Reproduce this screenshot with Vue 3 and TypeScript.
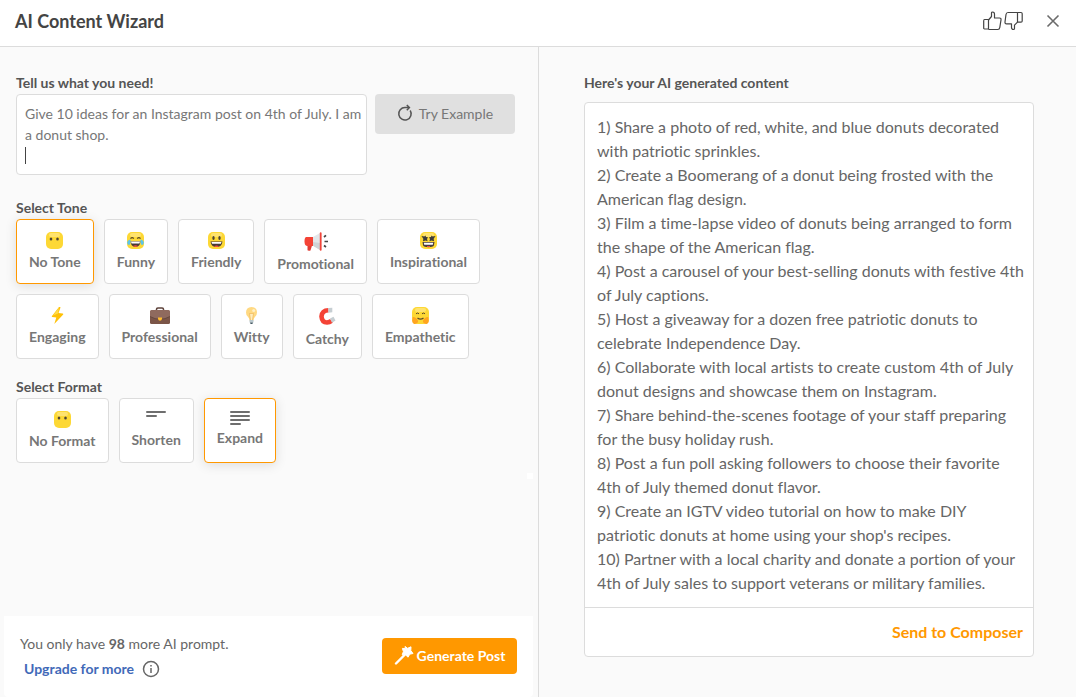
<script setup lang="ts">
import { ref } from 'vue'

interface Option {
  label: string
  icon: string
}

const prompt = ref('Give 10 ideas for an Instagram post on 4th of July. I am a donut shop.\n')
const tone = ref('No Tone')
const format = ref('Expand')
const remaining = 98

const tones: Option[] = [
  { label: 'No Tone', icon: 'blank' },
  { label: 'Funny', icon: 'joy' },
  { label: 'Friendly', icon: 'smile' },
  { label: 'Promotional', icon: 'megaphone' },
  { label: 'Inspirational', icon: 'star' },
  { label: 'Engaging', icon: 'bolt' },
  { label: 'Professional', icon: 'briefcase' },
  { label: 'Witty', icon: 'bulb' },
  { label: 'Catchy', icon: 'magnet' },
  { label: 'Empathetic', icon: 'hug' },
]

const formats: Option[] = [
  { label: 'No Format', icon: 'blank' },
  { label: 'Shorten', icon: 'short' },
  { label: 'Expand', icon: 'long' },
]

const groups = [
  { title: 'Select Tone', name: 'tone', options: tones, model: tone },
  { title: 'Select Format', name: 'format', options: formats, model: format },
]

const faces = ['blank', 'joy', 'smile', 'star', 'hug']

const ideas: string[] = [
  'Share a photo of red, white, and blue donuts decorated with patriotic sprinkles.',
  'Create a Boomerang of a donut being frosted with the American flag design.',
  'Film a time-lapse video of donuts being arranged to form the shape of the American flag.',
  'Post a carousel of your best-selling donuts with festive 4th of July captions.',
  'Host a giveaway for a dozen free patriotic donuts to celebrate Independence Day.',
  'Collaborate with local artists to create custom 4th of July donut designs and showcase them on Instagram.',
  'Share behind-the-scenes footage of your staff preparing for the busy holiday rush.',
  'Post a fun poll asking followers to choose their favorite 4th of July themed donut flavor.',
  "Create an IGTV video tutorial on how to make DIY patriotic donuts at home using your shop's recipes.",
  'Partner with a local charity and donate a portion of your 4th of July sales to support veterans or military families.',
]
</script>

<template>
  <div class="wizard">
    <header class="top">
      <h1>AI Content Wizard</h1>
      <div class="actions">
        <button type="button" class="plain" aria-label="Good result">
          <svg width="19" height="20" viewBox="0 0 19 20" fill="none" stroke="#444" stroke-width="1.2" stroke-linejoin="round">
            <path d="M1.5 8.500h4v9.500h-4q-.8 0-.8-1v-7q0-1.500.8-1.500z" />
            <path d="M5.500 9l3-3.500V2q0-1 1.200-1 1.800 0 1.800 2.200V7h5q1.700 0 1.500 1.800l-1.200 7.700q-.3 2-2 2H5.500" />
          </svg>
        </button>
        <button type="button" class="plain" aria-label="Bad result">
          <svg width="19" height="20" viewBox="0 0 19 20" fill="none" stroke="#444" stroke-width="1.2" stroke-linejoin="round">
            <path d="M13.500 1.500h3.500q1.200 0 1.200 1.200v7.300q0 1.200-1.200 1.200h-3.500z" />
            <path d="M13.500 1.500H4Q2.300 1.500 2 3.500L1 11q-.2 1.800 1.500 1.800h5v3.500q0 2.200 1.900 2.200 1.100 0 1.100-1v-3.300l3-3" />
          </svg>
        </button>
        <button type="button" class="plain close" aria-label="Close">
          <svg width="14" height="14" viewBox="0 0 14 14" fill="none" stroke="#6b6b6b" stroke-width="1.6">
            <path d="M1.500 1.500l11 11M12.500 1.500l-11 11" />
          </svg>
        </button>
      </div>
    </header>

    <div class="panes">
      <section class="pane">
        <div class="form">
          <label class="title" for="prompt">Tell us what you need!</label>
          <div class="ask">
            <div class="field">
              <textarea id="prompt" v-model="prompt"></textarea>
              <span class="caret"></span>
            </div>
            <button type="button" class="example">
              <svg width="16" height="18" viewBox="0 0 16 18" fill="none" stroke="#555" stroke-width="1.5">
                <path d="M13.200 6.500A6.200 6.200 0 1 1 8 3.600h4" />
                <path d="M9.800 1l2.600 2.600-2.600 2.600" />
              </svg>
              Try Example
            </button>
          </div>

          <fieldset v-for="g in groups" :key="g.name">
            <legend class="title">{{ g.title }}</legend>
            <div class="cards">
              <label v-for="o in g.options" :key="o.label" class="card" :class="{ active: g.model.value === o.label }">
                <input v-model="g.model.value" type="radio" :name="g.name" :value="o.label" />
                <svg v-if="faces.includes(o.icon)" width="17" height="17" viewBox="0 0 17 17">
                  <rect width="17" height="17" rx="5" fill="#fdd835" />
                  <rect x="3" y="1" width="11" height="4" rx="2" fill="#ffe36e" />
                  <g v-if="o.icon === 'blank'" fill="#4e4534">
                    <ellipse cx="5" cy="7" rx="1.300" ry="1.600" />
                    <ellipse cx="11.500" cy="7" rx="1.300" ry="1.600" />
                  </g>
                  <g v-else-if="o.icon === 'joy'">
                    <path d="M3.500 6.700q1.700-2 3.300 0M10.200 6.700q1.700-2 3.300 0" fill="none" stroke="#5c4b28" stroke-width="1.200" />
                    <path d="M3.500 9.300h10q-.5 5.700-5 5.700t-5-5.700z" fill="#4a3b36" />
                    <path d="M4 9.500h9l-.5 2h-8z" fill="#fff" />
                    <path d="M6 14q2.500-1.600 5 0-2.500 2-5 0z" fill="#ef4e43" />
                    <path d="M3.500 7.500Q0 8 .2 11q1 3.300 2.800 1.200.8-1.500.5-4.700zM13.500 7.500q3.500.5 3.300 3.500-1 3.300-2.800 1.200-.8-1.500-.5-4.700z" fill="#5cc4ea" />
                  </g>
                  <g v-else-if="o.icon === 'smile'">
                    <ellipse cx="5.500" cy="6" rx="1.200" ry="1.900" fill="#4e4534" />
                    <ellipse cx="11.500" cy="6" rx="1.200" ry="1.900" fill="#4e4534" />
                    <path d="M2.500 9.500h12q-.8 5.500-6 5.500t-6-5.500z" fill="#4a3b36" />
                    <path d="M3.500 10h10l-.6 1.800H4.100z" fill="#fff" />
                    <path d="M6 14.200q2.500-1.600 5 0-2.500 1.800-5 0z" fill="#ef4e43" />
                  </g>
                  <g v-else-if="o.icon === 'star'">
                    <path d="M1.500 4l2.800.5L5.500 3.500l.5 1.500 2 .3-1 1.700.6 2.200-2.100-.6-2.500.7.3-2.500zM15.500 4l-2.800.5-1.200-1-.5 1.500-2 .3 1 1.700-.6 2.200 2.100-.6 2.500.7-.3-2.500z" fill="#3c3b3a" />
                    <path d="M2.500 10h12l-.6 3.500q-1 1.700-5.400 1.700t-5.400-1.700z" fill="#4a3f3c" />
                    <path d="M3.800 10.800h9.400l-.4 2H4.200z" fill="#fff" />
                    <path d="M7 14h3v1H7z" fill="#ef4e43" />
                  </g>
                  <g v-else>
                    <path d="M4 6.800q1.500-1.500 3 0M10 6.800q1.500-1.500 3 0" fill="none" stroke="#5b4a2a" stroke-width="1" />
                    <path d="M5.500 11q3 2.200 6 0" fill="none" stroke="#5b4a2a" stroke-width="1.300" />
                    <path d="M.8 10q2.200-.5 3.600 1.500 2.400 1.500 1.300 4-1.500 2-4 1.200Q-.3 15.500.3 13zM16.200 10q-2.200-.5-3.600 1.500-2.400 1.500-1.300 4 1.500 2 4 1.200 2-1.200 1.400-3.700z" fill="#ffa51f" />
                  </g>
                </svg>
                <svg v-else-if="o.icon === 'megaphone'" width="24" height="19" viewBox="0 0 24 19">
                  <path d="M3.500 12h5l-2 6.500q-2.300.5-3-.2z" fill="#e03c34" />
                  <path d="M2 5h7v9H3Q.5 13.500.5 9.500T2 5z" fill="#f44336" />
                  <path d="M9 5l7-4v17l-7-4.300z" fill="#e3e7ea" />
                  <path d="M9 10l7 1v7l-7-4.300z" fill="#cfd4d7" />
                  <path d="M15.800 1q0-.8.9-.8.900 0 .9.800v17q0 .8-.9.800-.9 0-.9-.8z" fill="#f0453a" />
                  <path d="M20 5l2-1.700M20.500 9.500H24M20 13.500l2 1.500" stroke="#444" stroke-width="1.700" />
                </svg>
                <svg v-else-if="o.icon === 'bolt'" width="17" height="17" viewBox="0 0 17 17">
                  <path d="M10 0L2.800 9.200q-.3.800.5.900l4 .5L5.300 17l8.900-9.600q.3-.8-.5-.9L9.500 6l2-5.500q-.5-1-1.500-.5z" fill="#ffc107" />
                  <path d="M10 .5L4 8.500l5-2z" fill="#ffdb48" />
                </svg>
                <svg v-else-if="o.icon === 'briefcase'" width="20" height="17" viewBox="0 0 20 17">
                  <path d="M6.500 4V2.200q0-1.200 1.400-1.200h4.200q1.400 0 1.400 1.200V4" fill="none" stroke="#5e433b" stroke-width="1.500" />
                  <rect y="3.500" width="20" height="13.500" rx="1.500" fill="#7b5548" />
                  <path d="M0 4.500Q0 3 1.500 3h17Q20 3 20 4.500v5q-5 2.800-10 2.800T0 9.500z" fill="#8f6a5e" />
                  <path d="M0 9.500q5 2.800 10 2.800t10-2.800" fill="none" stroke="#60443b" stroke-width=".8" />
                  <path d="M8 10.500h4v1.500q-.4 1.700-2 1.700T8 12z" fill="#ffbd2f" />
                </svg>
                <svg v-else-if="o.icon === 'bulb'" width="17" height="17" viewBox="0 0 17 17">
                  <path d="M8.500 0Q3 .3 3 5.500q0 2.500 1.700 4 1.600 1.500 1.800 4h4q.2-2.500 1.800-4 1.700-1.500 1.700-4Q14 .3 8.500 0z" fill="#ffd982" />
                  <path d="M7.500 13L6.500 6.500h4L9.500 13" fill="#ffedbd" stroke="#ecae4b" stroke-width=".6" />
                  <circle cx="10.700" cy="3.500" r="1.500" fill="#fff0c5" />
                  <path d="M6.500 13h4v2.500h-4z" fill="#b9c7cd" />
                  <path d="M7 15.500h3l-.6 1.500H7.600z" fill="#455a64" />
                </svg>
                <svg v-else-if="o.icon === 'magnet'" width="18" height="19" viewBox="0 0 18 19">
                  <path d="M10.500 3.300Q4 3.500 3.500 9.500 4 15.500 9 15.500 11.500 15.300 13.500 13.800" fill="none" stroke="#f44336" stroke-width="4.600" />
                  <path d="M10.300 1.100l4-.4v4.600l-4 .4z" fill="#c6ced2" />
                  <path d="M12 11.600l3.500-1.800 2 3.700-3.500 2.300z" fill="#c6ced2" />
                </svg>
                <svg v-else-if="o.icon === 'short'" width="20" height="16" viewBox="0 0 20 16" stroke="#6e6e6e" stroke-width="2" stroke-linecap="round">
                  <path d="M1 1h18M1 5h9" />
                </svg>
                <svg v-else width="20" height="14" viewBox="0 0 20 14" stroke="#6e6e6e" stroke-width="2" stroke-linecap="round">
                  <path d="M1 1h18M1 5h18M1 9h18M1 13h9" />
                </svg>
                <span>{{ o.label }}</span>
              </label>
            </div>
          </fieldset>
        </div>

        <span class="grip"></span>

        <footer class="bottom">
          <div>
            <p>You only have <b>{{ remaining }}</b> more AI prompt.</p>
            <p class="upgrade">
              <a href="#">Upgrade for more</a>
              <svg width="18" height="18" viewBox="0 0 18 18" fill="none" stroke="#666" stroke-width="1.500">
                <circle cx="9" cy="9" r="7.500" />
                <path d="M9 8v5M9 5v1.600" />
              </svg>
            </p>
          </div>
          <button type="button" class="generate">
            <svg width="20" height="20" viewBox="0 0 20 20">
              <path d="M2 18.500L11 9.500" stroke="#fff" stroke-width="2.400" stroke-linecap="round" />
              <path d="M11 1.500l2.600 1.800L17 1.800l-.2 3.700L19 8.500l-3.300.7-1.600 3-2.400-2.200-3.500-.2 1.200-3.200-1-3.200 3 .2z" fill="#fff" stroke="#fff" stroke-linejoin="round" />
            </svg>
            <span>Generate Post</span>
          </button>
        </footer>
      </section>

      <section class="pane result">
        <h2 class="title">Here's your AI generated content</h2>
        <div class="box">
          <div class="text">
            <p v-for="(idea, i) in ideas" :key="i">{{ i + 1 }}) {{ idea }}</p>
          </div>
          <div class="send">
            <button type="button" class="plain">Send to Composer</button>
          </div>
        </div>
      </section>
    </div>
  </div>
</template>

<style>
body {
  margin: 0;
  background: #fafafa;
}
</style>

<style scoped>
.wizard {
  display: flex;
  flex-direction: column;
  box-sizing: border-box;
  min-height: 100vh;
  font: 14px/21px Lato, "Open Sans", sans-serif;
  font-variant-ligatures: none;
  color: #666;
}
h1, h2, p { margin: 0; }
button { font: inherit; cursor: pointer; }
svg { display: block; flex: none; }

.top {
  display: flex;
  align-items: center;
  justify-content: space-between;
  height: 46px;
  padding: 0 16px 4px 15px;
  box-sizing: border-box;
  background: #fff;
}
h1 {
  font-size: 18px;
  line-height: 24px;
  color: #444;
}
.actions { display: flex; align-items: center; gap: 2px; }
.plain { padding: 0; border: 0; background: none; }
.close { margin-left: 21px; }

.panes {
  display: grid;
  grid-template-columns: 1fr 1fr;
  flex: 1;
  border-top: 1px solid #dcdcdc;
}
.pane {
  position: relative;
  display: flex;
  flex-direction: column;
  justify-content: space-between;
}
.title {
  display: block;
  padding: 0 0 2px;
  font-size: 14px;
  line-height: 19px;
  font-weight: 700;
  color: #555;
}
.form { padding: 26px 16px; }
.ask { display: flex; align-items: flex-start; gap: 8px; }
.field { position: relative; width: 351px; }
textarea {
  display: block;
  box-sizing: border-box;
  width: 100%;
  height: 81px;
  padding: 8px 2px 8px 8px;
  border: 1px solid #dcdcdc;
  border-radius: 4px;
  background: #fff;
  font: inherit;
  color: #777;
  resize: none;
  outline: none;
  overflow: hidden;
}
.caret {
  position: absolute;
  left: 9px;
  top: 53px;
  width: 1px;
  height: 17px;
  background: #444;
}
.example {
  display: flex;
  align-items: center;
  justify-content: center;
  gap: 6px;
  width: 140px;
  height: 40px;
  padding: 0 0 2px;
  border: 0;
  border-radius: 4px;
  background: #e0e0e0;
  color: #777;
}

fieldset {
  min-width: 0;
  margin: 23px 0 0;
  padding: 0;
  border: 0;
}
fieldset + fieldset { margin-top: 18px; }
.cards { display: flex; flex-wrap: wrap; gap: 10px; }
.card {
  position: relative;
  display: flex;
  flex-direction: column;
  align-items: center;
  gap: 3px;
  box-sizing: border-box;
  height: 65px;
  padding: 12px 12px 0;
  border: 1px solid #dcdcdc;
  border-radius: 4px;
  background: #fff;
  line-height: 20px;
  font-weight: 700;
  color: #777;
  cursor: pointer;
}
.card input {
  position: absolute;
  inset: 0;
  margin: 0;
  opacity: 0;
}
.active {
  border-color: #ff9800;
  box-shadow: 0 2px 12px rgba(0, 0, 0, 0.12);
}

.grip {
  position: absolute;
  right: 5px;
  top: 426px;
  width: 6px;
  height: 6px;
  background: #fff;
}

.bottom {
  display: flex;
  align-items: flex-start;
  justify-content: space-between;
  box-sizing: border-box;
  height: 81px;
  margin: 0 5px 0 4px;
  padding: 17px 16px 0;
  border-radius: 0 0 4px 4px;
  background: #fff;
}
.upgrade {
  display: flex;
  align-items: center;
  gap: 8px;
  margin-top: 4px;
  padding-left: 4px;
}
.upgrade a {
  font-weight: 700;
  color: #4169b8;
  text-decoration: none;
}
.generate {
  display: flex;
  align-items: center;
  justify-content: center;
  gap: 3px;
  width: 135px;
  height: 36px;
  margin-top: 5px;
  padding: 0 0 2px;
  border: 0;
  border-radius: 4px;
  background: #ff9800;
  font-weight: 700;
  color: #fff;
}

.result {
  justify-content: flex-start;
  padding: 26px 42px 40px 45px;
  border-left: 1px solid #dcdcdc;
}
.box {
  margin-top: 8px;
  border: 1px solid #dcdcdc;
  border-radius: 4px;
  background: #fff;
}
.text {
  padding: 12px 8px 12px 12px;
  font-size: 16px;
  line-height: 24px;
}
.send {
  display: flex;
  align-items: center;
  justify-content: flex-end;
  height: 46px;
  padding: 0 10px 2px;
  border-top: 1px solid #dcdcdc;
}
.send button {
  font-size: 16px;
  font-weight: 700;
  color: #ff9800;
}
</style>
